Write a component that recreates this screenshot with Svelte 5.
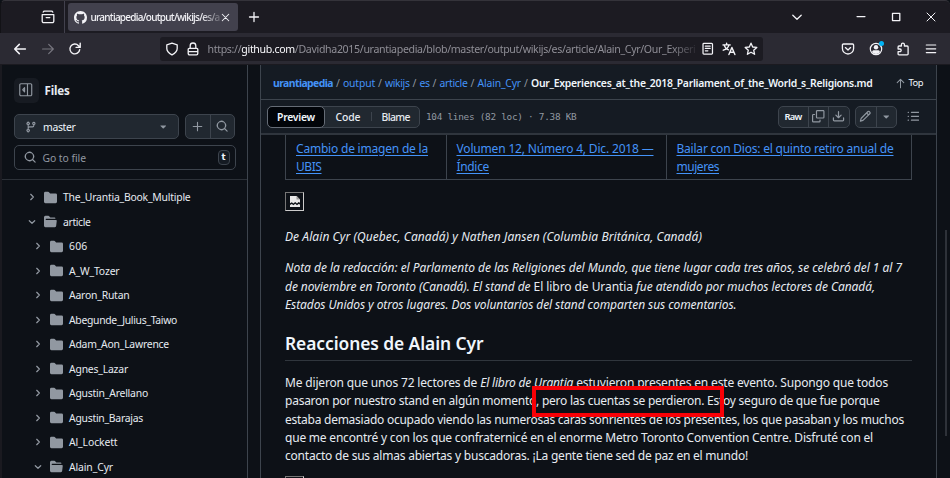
<script>
  const tree = [
    { name: 'The_Urantia_Book_Multiple', w: 127.5, level: 0 },
    { name: 'article', w: 27.5, level: 0, open: true },
    { name: '606', w: 18.5, level: 1 },
    { name: 'A_W_Tozer', w: 50.5, level: 1 },
    { name: 'Aaron_Rutan', w: 60.5, level: 1 },
    { name: 'Abegunde_Julius_Taiwo', w: 108, level: 1 },
    { name: 'Adam_Aon_Lawrence', w: 100, level: 1 },
    { name: 'Agnes_Lazar', w: 59, level: 1 },
    { name: 'Agustin_Arellano', w: 79, level: 1 },
    { name: 'Agustin_Barajas', w: 74, level: 1 },
    { name: 'Al_Lockett', w: 48.5, level: 1 },
    { name: 'Alain_Cyr', w: 44, level: 1, open: true }
  ];
  const crumbs = [
    ['urantiapedia', 60],
    ['output', 32],
    ['wikijs', 24.5],
    ['es', 10],
    ['article', 28],
    ['Alain_Cyr', 43.5]
  ];
  const icons = {
    folder: 'M1.75 1A1.75 1.75 0 0 0 0 2.75v10.5C0 14.216.784 15 1.75 15h12.5A1.75 1.75 0 0 0 16 13.25v-8.5A1.75 1.75 0 0 0 14.25 3H7.5a.25.25 0 0 1-.2-.1l-.9-1.2C6.07 1.26 5.55 1 5 1H1.75Z',
    folderOpen: 'M.513 1.513A1.75 1.75 0 0 1 1.75 1h3.5c.55 0 1.07.26 1.4.7l.9 1.2a.25.25 0 0 0 .2.1H13a1 1 0 0 1 1 1v.5H2.75a.75.75 0 0 0 0 1.5h11.978a1 1 0 0 1 .994 1.117L15 13.25A1.75 1.75 0 0 1 13.25 15H1.75A1.75 1.75 0 0 1 0 13.25V2.75c0-.464.184-.91.513-1.237Z',
    copy: 'M0 6.75C0 5.784.784 5 1.75 5h1.5a.75.75 0 0 1 0 1.5h-1.5a.25.25 0 0 0-.25.25v7.5c0 .138.112.25.25.25h7.5a.25.25 0 0 0 .25-.25v-1.5a.75.75 0 0 1 1.5 0v1.5A1.75 1.75 0 0 1 9.25 16h-7.5A1.75 1.75 0 0 1 0 14.25Z M5 1.75C5 .784 5.784 0 6.75 0h7.5C15.216 0 16 .784 16 1.75v7.5A1.75 1.75 0 0 1 14.25 11h-7.5A1.75 1.75 0 0 1 5 9.25Zm1.75-.25a.25.25 0 0 0-.25.25v7.5c0 .138.112.25.25.25h7.5a.25.25 0 0 0 .25-.25v-7.5a.25.25 0 0 0-.25-.25Z',
    download: 'M2.75 14A1.75 1.75 0 0 1 1 12.25v-2.5a.75.75 0 0 1 1.5 0v2.5c0 .138.112.25.25.25h10.5a.25.25 0 0 0 .25-.25v-2.5a.75.75 0 0 1 1.5 0v2.5A1.75 1.75 0 0 1 13.25 14Z M7.25 7.689V2a.75.75 0 0 1 1.5 0v5.689l1.97-1.969a.749.749 0 1 1 1.06 1.06l-3.25 3.25a.749.749 0 0 1-1.06 0L4.22 6.78a.749.749 0 1 1 1.06-1.06l1.97 1.969Z',
    pencil: 'M11.013 1.427a1.75 1.75 0 0 1 2.474 0l1.086 1.086a1.75 1.75 0 0 1 0 2.474l-8.61 8.61c-.21.21-.47.364-.756.445l-3.251.93a.75.75 0 0 1-.927-.928l.929-3.25c.081-.286.235-.547.445-.758l8.61-8.61Zm.176 4.823L9.75 4.81l-6.286 6.287a.253.253 0 0 0-.064.108l-.558 1.953 1.953-.558a.253.253 0 0 0 .108-.064Zm1.238-3.763a.25.25 0 0 0-.354 0L10.811 3.75l1.439 1.44 1.263-1.263a.25.25 0 0 0 0-.354Z',
    search: 'M10.68 11.74a6 6 0 0 1-7.922-8.982 6 6 0 0 1 8.982 7.922l3.04 3.04a.749.749 0 0 1-.326 1.275.749.749 0 0 1-.734-.215ZM11.5 7a4.499 4.499 0 1 0-8.997 0A4.499 4.499 0 0 0 11.5 7Z',
    branch: 'M9.5 3.25a2.25 2.25 0 1 1 3 2.122V6A2.5 2.5 0 0 1 10 8.5H6a1 1 0 0 0-1 1v1.128a2.251 2.251 0 1 1-1.5 0V5.372a2.25 2.25 0 1 1 1.5 0v1.836A2.493 2.493 0 0 1 6 7h4a1 1 0 0 0 1-1v-.628A2.25 2.25 0 0 1 9.5 3.25Zm-6 0a.75.75 0 1 0 1.5 0 .75.75 0 0 0-1.5 0Zm8.25-.75a.75.75 0 1 0 0 1.5.75.75 0 0 0 0-1.5ZM4.25 12a.75.75 0 1 0 0 1.5.75.75 0 0 0 0-1.5Z',
    github: 'M8 0c4.42 0 8 3.58 8 8a8.013 8.013 0 0 1-5.45 7.59c-.4.08-.55-.17-.55-.38 0-.27.01-1.13.01-2.2 0-.75-.25-1.23-.54-1.48 1.78-.2 3.65-.88 3.65-3.95 0-.88-.31-1.59-.82-2.15.08-.2.36-1.02-.08-2.12 0 0-.67-.22-2.2.82-.64-.18-1.32-.27-2-.27-.68 0-1.36.09-2 .27-1.53-1.03-2.2-.82-2.2-.82-.44 1.1-.16 1.92-.08 2.12-.51.56-.82 1.28-.82 2.15 0 3.06 1.86 3.75 3.64 3.95-.23.2-.44.55-.51 1.07-.46.21-1.61.55-2.33-.66-.15-.24-.6-.83-1.23-.82-.67.01-.27.38.01.53.34.19.73.9.82 1.13.16.45.68 1.31 2.69.94 0 .67.01 1.3.01 1.49 0 .21-.15.45-.55.38A7.995 7.995 0 0 1 0 8c0-4.42 3.58-8 8-8Z'
  };

  // Tracks a line of text so that it spans the given width.
  function fit(node, width) {
    const natural = node.getBoundingClientRect().width;
    node.style.letterSpacing = (width - natural) / node.textContent.length + 'px';
  }
</script>

{#snippet oct(name, size = 12.5)}
  <svg width={size} height={size} viewBox="0 0 16 16" fill="currentColor"><path d={icons[name]} /></svg>
{/snippet}

{#snippet line(d, size = 14, sw = 1.3)}
  <svg width={size} height={size} viewBox="0 0 14 14" fill="none" stroke="currentColor" stroke-width={sw} stroke-linecap="round" stroke-linejoin="round"><path {d} /></svg>
{/snippet}

{#snippet caret()}
  <svg width="6.5" height="4" viewBox="0 0 8 5" fill="currentColor"><path d="M.9.5h6.2c.4 0 .5.4.3.7L4.3 4.3a.5.5 0 0 1-.6 0L.6 1.2C.4.9.5.5.9.5Z" /></svg>
{/snippet}

{#snippet broken()}
  <svg width="10" height="11" viewBox="0 0 10 11"><path d="M0 0h6.6L10 3.4v3.4L8.6 6 7 7.4 5.2 6 3.4 7.4 1.8 6.2 0 7.2Z" fill="#e9e9e9" /><path d="M6.5 0v3.5H10Z" fill="#999" /><path d="m0 9 1.8-1 1.6 1.2L5.2 7.8 7 9.2l1.6-1.3L10 8.6V11H0Z" fill="#e9e9e9" /></svg>
{/snippet}

<div class="window">
  <header class="tabs">
    <span class="view">{@render line('M1.2 4.6h11.6v6.6a1.5 1.5 0 0 1-1.5 1.5H2.7a1.5 1.5 0 0 1-1.5-1.5ZM2.2 2.1q.3-.9 1.3-.9h7q1 0 1.3.9M5.2 7.6h3.6')}</span>
    <i class="divider"></i>
    <div class="tab">
      {@render oct('github', 13)}
      <div class="title"><span class="t" use:fit={129}>urantiapedia/output/wikijs/es/a</span></div>
      <span class="x">{@render line('M3.5 3.5l7 7M10.5 3.5l-7 7', 13, 1.1)}</span>
    </div>
    <span class="plus">{@render line('M7 2.5v9M2.5 7h9')}</span>
    <div class="controls">
      {@render line('M2.8 5.2 7 9.2l4.2-4')}
      <span class="min">{@render line('M3 6.6h8', 14, 1.1)}</span>
      {@render line('M3.5 3.3h7.3v7.3H3.5Z', 14, 1.3)}
      {@render line('M3 3l8 8M11 3l-8 8', 14, 1)}
    </div>
  </header>

  <nav class="toolbar">
    <div class="history">
      {@render line('M12.4 7H1.8M6.3 2.4 1.7 7l4.6 4.6', 14, 1.5)}
      <span class="off">{@render line('M1.6 7h10.6M7.7 2.4 12.3 7l-4.6 4.6', 14, 1.2)}</span>
      {@render line('M11.7 7.6a4.9 4.9 0 1 1-1.2-3.9l1.5 1.5M12.2 1.3v4.1H8.1', 14, 1.4)}
    </div>
    <div class="urlbar">
      {@render line('M7 1.2 12.2 2.8v3.6c0 2.7-2.3 4.9-5.2 6.5-2.9-1.6-5.2-3.8-5.2-6.5V2.8Z')}
      <span class="lock">{@render line('M3.2 6.3h7.6a1 1 0 0 1 1 1v4.2a1.3 1.3 0 0 1-1.3 1.3h-7a1.3 1.3 0 0 1-1.3-1.3V7.3a1 1 0 0 1 1-1ZM4.2 6V3.8a2.8 2.8 0 0 1 5.6 0V6M3 9.6h8')}</span>
      <div class="url"><span class="t" use:fit={488}>https://<b>github.com</b>/Davidha2015/urantiapedia/blob/master/output/wikijs/es/article/Alain_Cyr/Our_Experi</span></div>
      <div class="urlicons">
        {@render line('M3 1.4h8a.9.9 0 0 1 .9.9v9.4a.9.9 0 0 1-.9.9H3a.9.9 0 0 1-.9-.9V2.3a.9.9 0 0 1 .9-.9ZM4.5 4.3h5M4.5 6.7h5M4.5 9.1h2.6', 13.5)}
        {@render line('M1 2.9h7.2M4.6 1.3v1.6M2.1 3.2c.8 2.4 2.7 4 4.4 4.6M7 3.1C6.3 5.5 3.6 7.5 1.3 8.2M6.9 12.6 9.9 5.4l3 7.2M7.9 10.3h4', 14, 1.4)}
        {@render line('M7 1.2 8.7 5l4.1.4-3.1 2.8.9 4.1L7 10.2l-3.6 2.1.9-4.1-3.1-2.8L5.3 5Z', 14, 1.3)}
      </div>
    </div>
    <div class="extras">
      {@render line('M2.4 2h9.2a1 1 0 0 1 1 1v3.4a5.6 5.6 0 0 1-11.2 0V3a1 1 0 0 1 1-1ZM4.4 5.6 7 8l2.6-2.4')}
      <span class="account">
        <svg width="14" height="14" viewBox="0 0 14 14"><circle cx="7" cy="7" r="5.7" fill="none" stroke="currentColor" stroke-width="1.2" /><circle cx="7" cy="5.3" r="2.2" fill="currentColor" /><path d="M3.2 10.3a1.5 1.5 0 0 1 1.5-2h4.6a1.5 1.5 0 0 1 1.5 2A5 5 0 0 1 7 11.9a5 5 0 0 1-3.8-1.6Z" fill="currentColor" /></svg>
        <i></i>
      </span>
      {@render line('M5.4 4V2.6a1.5 1.5 0 0 1 3 0V4h2.8a.9.9 0 0 1 .9.9v7a.9.9 0 0 1-.9.9H3a.9.9 0 0 1-.9-.9V9.6h1.8a1.3 1.3 0 0 0 0-2.6H2.1V4.9A.9.9 0 0 1 3 4Z')}
      {@render line('M2.3 3h9.4M2.3 6.8h9.4M2.3 10.6h9.4', 14, 1.2)}
    </div>
  </nav>

  <div class="page">
    <aside>
      <div class="files">
        <span class="collapse">{@render line('M2 .8h10A1.2 1.2 0 0 1 13.2 2v10a1.2 1.2 0 0 1-1.2 1.2H2A1.2 1.2 0 0 1 .8 12V2A1.2 1.2 0 0 1 2 .8ZM8.8 1v12M5.8 4.8 3.9 7l1.9 2.2Z', 13.5, 1.2)}</span>
        <strong class="t" use:fit={25}>Files</strong>
      </div>
      <div class="branchrow">
        <div class="branch">{@render oct('branch', 12)}<span class="t" use:fit={32.5}>master</span><em>{@render caret()}</em></div>
        <div class="pair">
          <span>{@render line('M7 2.4v9.2M2.4 7h9.2', 13, 1.2)}</span>
          <span>{@render oct('search', 12.5)}</span>
        </div>
      </div>
      <div class="goto">{@render oct('search', 12.5)}<span class="t" use:fit={43.5}>Go to file</span><kbd>t</kbd></div>
      <ul>
        {#each tree as item}
          <li class:nested={item.level === 1}>
            <span class="chev">{@render line(item.open ? 'M3.2 5.2 7 8.8l3.8-3.6' : 'M5.2 3.2 8.9 7l-3.7 3.8', 10, 1.7)}</span>
            <span class="folder">{@render oct(item.open ? 'folderOpen' : 'folder', 13)}</span>
            <span class="t" use:fit={item.w}>{item.name}</span>
          </li>
        {/each}
      </ul>
    </aside>

    <main>
      <div class="crumbs">
        {#each crumbs as [name, w], i}
          <a class="t" class:root={i === 0} use:fit={w}>{name}</a><span class="sep">/</span>
        {/each}
        <strong class="t" use:fit={341.5}>Our_Experiences_at_the_2018_Parliament_of_the_World_s_Religions.md</strong>
        <div class="top">{@render line('M7 12.3V2M2.8 6 7 1.8 11.2 6', 11, 1.3)}<span class="t" use:fit={14.5}>Top</span></div>
      </div>
      <div class="filebar">
        <div class="segments">
          <span class="on"><b class="t" use:fit={38}>Preview</b></span>
          <span class="code"><span class="t" use:fit={25}>Code</span></span>
          <i></i>
          <span class="blame"><span class="t" use:fit={28.5}>Blame</span></span>
        </div>
        <span class="meta t" use:fit={150.5}>104 lines (82 loc) · 7.38 KB</span>
        <div class="actions">
          <div class="group"><span class="raw"><b class="t" use:fit={17}>Raw</b></span><span>{@render oct('copy', 12.5)}</span><span>{@render oct('download', 13)}</span></div>
          <div class="group edit"><span>{@render oct('pencil', 12.5)}</span><span>{@render caret()}</span></div>
          <span class="list">{@render line('M5 2.6h8M5 7h8M5 11.4h8M1.3 2.6h.3M1.3 7h.3M1.3 11.4h.3', 12.5, 1.4)}</span>
        </div>
      </div>

      <article>
        <div class="table">
          <div class="cell c1"><a class="t" use:fit={132}>Cambio de imagen de la</a><br /><a class="t" use:fit={25.5}>UBIS</a></div>
          <div class="cell c2"><a class="t" use:fit={197}>Volumen 12, Número 4, Dic. 2018 —</a><br /><a class="t" use:fit={32.5}>Índice</a></div>
          <div class="cell c3"><a class="t" use:fit={217}>Bailar con Dios: el quinto retiro anual de</a><br /><a class="t" use:fit={42.5}>mujeres</a></div>
        </div>
        <div class="missing">{@render broken()}</div>
        <p class="it byline"><span class="t" use:fit={417}>De Alain Cyr (Quebec, Canadá) y Nathen Jansen (Columbia Británica, Canadá)</span></p>
        <p class="it note">
          <span class="t" use:fit={617}>Nota de la redacción: el Parlamento de las Religiones del Mundo, que tiene lugar cada tres años, se celebró del 1 al 7</span><br />
          <span class="t" use:fit={590}>de noviembre en Toronto (Canadá). El stand de <q>El libro de Urantia</q> fue atendido por muchos lectores de Canadá,</span><br />
          <span class="t" use:fit={451.5}>Estados Unidos y otros lugares. Dos voluntarios del stand comparten sus comentarios.</span>
        </p>
        <h2><span class="t" use:fit={198.5}>Reacciones de Alain Cyr</span></h2>
        <p class="body">
          <span class="t" use:fit={603}>Me dijeron que unos 72 lectores de <em>El libro de Urantia</em> estuvieron presentes en este evento. Supongo que todos</span><br />
          <span class="t" use:fit={594.5}>pasaron por nuestro stand en algún momento, pero las cuentas se perdieron. Estoy seguro de que fue porque</span><br />
          <span class="t" use:fit={619}>estaba demasiado ocupado viendo las numerosas caras sonrientes de los presentes, los que pasaban y los muchos</span><br />
          <span class="t" use:fit={588}>que me encontré y con los que confraternicé en el enorme Metro Toronto Convention Centre. Disfruté con el</span><br />
          <span class="t" use:fit={463}>contacto de sus almas abiertas y buscadoras. ¡La gente tiene sed de paz en el mundo!</span>
          <i class="highlight"></i>
        </p>
        <div class="missing next"></div>
      </article>
    </main>
    <i class="scroll"></i>
  </div>
</div>

<style>
  :global(body) { background: #0d1117; }
  .window { width: 950px; height: 478px; overflow: hidden; display: flex; flex-direction: column; background: #0d1117; color: #e6ebf1; font: 10.4px/16px "Noto Sans", "Open Sans", sans-serif; box-sizing: border-box; }
  .window * { box-sizing: border-box; }
  svg { display: block; flex: none; }
  .t { display: inline-block; white-space: nowrap; flex: none; }

  .tabs { flex: none; height: 33px; display: flex; align-items: center; background: #1c1b22; border-top: 1px solid #34333a; border-left: 1px solid #121216; border-radius: 5px 5px 0 0; color: #f3f3f7; }
  .view { margin-left: 39.5px; }
  .divider { width: 1px; height: 32px; margin-left: 9px; background: #42414d; }
  .tab { width: 170px; height: 28px; margin: 0 0 0 3px; padding: 0 5px 0 6px; display: flex; align-items: center; background: #42414d; border-radius: 3px; }
  .title { width: 129px; margin-left: 4px; overflow: hidden; -webkit-mask: linear-gradient(90deg, #000 85%, #0003 100%); mask: linear-gradient(90deg, #000 85%, #0003 100%); }
  .title .t { font-size: 10px; font-weight: 500; }
  .x { margin-left: -1px; }
  .plus { margin-left: 9px; }
  .controls { margin-left: auto; margin-right: 12px; display: flex; gap: 21px; }
  .min { margin-left: 29px; }

  .toolbar { flex: none; height: 32px; display: flex; align-items: center; background: #2b2a33; border-bottom: 1px solid #1b1a20; color: #f3f3f7; }
  .history { display: flex; gap: 13.5px; margin-left: 13px; }
  .off { color: #77767f; }
  .urlbar { width: 603px; height: 24px; margin-left: 78px; padding-left: 5px; display: flex; align-items: center; background: #1c1b22; border-radius: 3px; }
  .lock { margin-left: 7px; }
  .url { width: 488px; margin-left: 7.5px; padding-top: 1px; color: #8f8e96; overflow: hidden; -webkit-mask: linear-gradient(90deg, #000 95%, #0002 100%); mask: linear-gradient(90deg, #000 95%, #0002 100%); }
  .url .t { font-size: 10.6px; }
  .url b { font-weight: 400; color: #fbfbfe; }
  .urlicons { display: flex; gap: 7.5px; margin-left: 5.5px; }
  .extras { display: flex; gap: 13.7px; margin-left: 78px; }
  .account { position: relative; }
  .account i { position: absolute; right: -1px; top: -1px; width: 5px; height: 5px; border-radius: 50%; background: #00b3f4; }

  .page { flex: 1; min-height: 0; display: flex; background: #0d1117; border-left: 2px solid #1a1a20; }
  aside { width: 246px; border-right: 1px solid #3d444d; padding: 12.5px 12px 0 11.5px; }
  .files { display: flex; align-items: center; height: 25px; }
  .files strong { font-size: 11.6px; font-weight: 700; margin: 1px 0 0 6px; }
  .collapse { width: 25px; height: 25px; border-radius: 5px; background: #171b22; color: #9198a1; display: grid; place-items: center; }
  .branchrow { display: flex; gap: 6px; margin-top: 11.5px; }
  .branch, .pair { height: 25px; border: 1px solid #3d444d; border-radius: 5px; background: #212830; display: flex; align-items: center; color: #9198a1; }
  .branch { width: 166px; padding: 0 12px 0 10px; }
  .branch .t { margin: 1px 0 0 6.5px; color: #f0f6fc; }
  .branch em { margin-left: auto; }
  .pair { width: 50px; }
  .pair span { flex: 1; height: 100%; display: grid; place-items: center; }
  .pair span + span { border-left: 1px solid #3d444d; }
  .goto { margin-top: 6px; height: 25px; border: 1px solid #3d444d; border-radius: 5px; display: flex; align-items: center; padding: 0 5px 0 9.5px; color: #9198a1; width: 222px; }
  .goto .t { margin: 1px 0 0 6px; }
  kbd { margin-left: auto; width: 12px; height: 15px; border: 1px solid #3d444d; border-radius: 4px; background: #151b23; color: #f0f6fc; font: bold 8.5px/12px "DejaVu Sans", sans-serif; text-align: center; }
  ul { list-style: none; margin: 9px -12px 0 -11.5px; padding: 5px 0 0; border-top: 1px solid #2c3138; }
  li { height: 24.5px; display: flex; align-items: center; padding-left: 25px; }
  li.nested { padding-left: 31px; }
  .chev, .folder { color: #9198a1; }
  .folder { margin: 0 6px 0 7px; }

  main { width: 677px; margin-left: 12px; border: solid #3d444d; border-width: 0 1px; }
  .crumbs { height: 35px; display: flex; align-items: center; padding: 2px 13px 0 12px; background: #151b23; border-bottom: 1px solid #3d444d; font-size: 10.4px; }
  .crumbs a { color: #4493f8; }
  .crumbs .root { font-weight: 700; }
  .crumbs strong { font-weight: 600; color: #f0f6fc; }
  .sep { width: 10px; text-align: center; color: #9198a1; }
  .top { margin-left: auto; display: flex; align-items: center; gap: 3px; font-size: 9.4px; color: #f0f6fc; }
  .top svg { color: #9198a1; }
  .filebar { height: 35px; display: flex; align-items: center; padding-left: 6px; background: #151b23; border-bottom: 2px solid #2f353d; color: #e6ebf1; }
  .segments { width: 153px; height: 22px; display: flex; align-items: center; background: #212830; border: 1px solid #3d444d; border-radius: 5px; font-weight: 500; }
  .segments .t { position: relative; top: .5px; }
  .on { width: 58px; height: 22px; margin: -1px 0 -1px -1px; padding-left: 9px; display: flex; align-items: center; background: #010409; border: 1px solid #656c76; border-radius: 5px; color: #f0f6fc; }
  .on b { font-weight: 600; }
  .code { margin-left: 10.5px; }
  .segments i { width: 1px; height: 9px; margin: 0 10px; background: #3d444d; }
  .meta { margin-left: 6px; font: 9.4px/16px "DejaVu Sans Mono", monospace; color: #9198a1; }
  .actions { margin-left: auto; display: flex; align-items: center; color: #9198a1; }
  .group { height: 22px; display: flex; background: #212830; border: 1px solid #3d444d; border-radius: 5px; }
  .group span { width: 20.5px; display: flex; align-items: center; justify-content: center; }
  .group span + span { border-left: 1px solid #3d444d; }
  .group .raw { width: 29px; color: #f0f6fc; }
  .raw b { font-size: 9.4px; font-weight: 600; }
  .edit { margin-left: 5px; }
  .edit span { width: 20px; }
  .list { margin: 0 17px 0 10px; }

  article { padding-left: 24px; color: #e6ebf1; font-size: 12px; line-height: 18.4px; }
  .table { display: flex; width: 627px; height: 45px; border: 1px solid #3d444d; border-top: 0; }
  .cell { padding: 4.5px 0 0 10px; }
  .cell + .cell { border-left: 1px solid #3d444d; padding-left: 9.5px; }
  .cell a { color: #4493f8; text-decoration: underline; text-underline-offset: 2px; height: 18.4px; vertical-align: top; }
  .c1 { width: 160px; }
  .c2 { width: 220px; }
  .missing { width: 19px; height: 19px; margin-top: 12px; border: 1px solid; border-color: #777 #ccc #ccc #777; display: grid; place-items: center; }
  .next { margin-top: 10.2px; }
  p { margin: 0; position: relative; }
  p .t { height: 18.4px; vertical-align: top; }
  .it { font-style: italic; }
  q { quotes: none; font-style: normal; }
  .byline { margin-top: 17.3px; }
  .note { margin-top: 12.7px; }
  h2 { width: 627px; height: 30.5px; margin: 15.5px 0 13.1px; border-bottom: 1px solid #30363d; font-size: 17.4px; line-height: 26.5px; font-weight: 600; color: #f0f6fc; }
  .highlight { position: absolute; left: 247px; top: 12.3px; width: 192px; height: 31px; border: 4px solid #f90006; }
  .scroll { width: 2px; height: 206px; margin: 165px 0 0 8px; background: #2e3239; }
</style>
